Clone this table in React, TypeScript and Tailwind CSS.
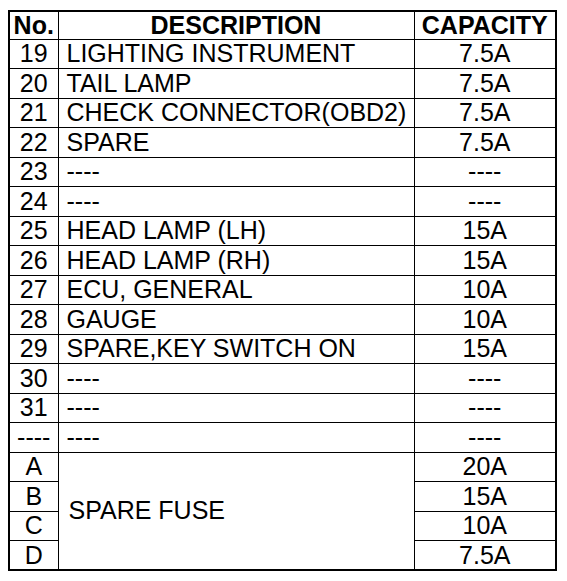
const rows: [string, string, string][] = [
  ["19", "LIGHTING INSTRUMENT", "7.5A"],
  ["20", "TAIL LAMP", "7.5A"],
  ["21", "CHECK CONNECTOR(OBD2)", "7.5A"],
  ["22", "SPARE", "7.5A"],
  ["23", "----", "----"],
  ["24", "----", "----"],
  ["25", "HEAD LAMP (LH)", "15A"],
  ["26", "HEAD LAMP (RH)", "15A"],
  ["27", "ECU, GENERAL", "10A"],
  ["28", "GAUGE", "10A"],
  ["29", "SPARE,KEY SWITCH ON", "15A"],
  ["30", "----", "----"],
  ["31", "----", "----"],
  ["----", "----", "----"],
];

const spares: [string, string][] = [
  ["A", "20A"],
  ["B", "15A"],
  ["C", "10A"],
  ["D", "7.5A"],
];

const cell = "border border-black p-0 leading-none";

export default function App() {
  return (
    <div className="min-h-[581px] w-[567px] bg-white pl-[8px] pt-[10px] font-['Liberation_Sans',Arial,sans-serif] text-[25px] text-black">
      <table className="w-[547px] table-fixed border-collapse border-2 border-black">
        <colgroup>
          <col className="w-[49px]" />
          <col className="w-[356px]" />
          <col className="w-[142px]" />
        </colgroup>
        <thead>
          <tr className="h-[28px] font-bold">
            <th className={`${cell} text-center`}>No.</th>
            <th className={`${cell} text-center`}>DESCRIPTION</th>
            <th className={`${cell} text-center`}>CAPACITY</th>
          </tr>
        </thead>
        <tbody>
          {rows.map(([no, desc, cap], i) => (
            <tr key={i} className="h-[29.5px]">
              <td className={`${cell} text-center`}>{no}</td>
              <td className={`${cell} pl-[8px] text-left`}>{desc}</td>
              <td className={`${cell} text-center`}>{cap}</td>
            </tr>
          ))}
          {spares.map(([letter, cap], i) => (
            <tr key={letter} className="h-[29.5px]">
              <td className={`${cell} text-center`}>{letter}</td>
              {i === 0 && (
                <td rowSpan={4} className={`${cell} pl-[10px] text-left`}>
                  SPARE FUSE
                </td>
              )}
              <td className={`${cell} text-center`}>{cap}</td>
            </tr>
          ))}
        </tbody>
      </table>
    </div>
  );
}
